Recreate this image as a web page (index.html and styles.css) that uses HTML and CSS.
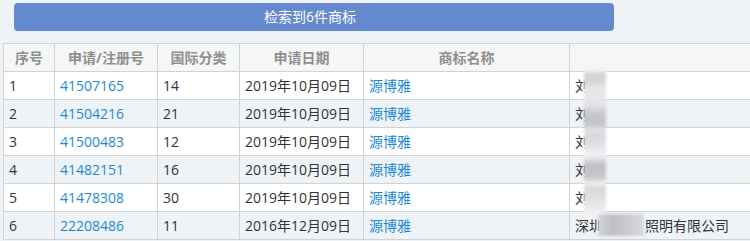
FILE: index.html
```html
<!DOCTYPE html>
<html lang="zh-CN">
<head>
<meta charset="utf-8">
<link rel="stylesheet" href="styles.css">
</head>
<body>
<div class="page">
  <div class="bar"><button class="btn">检索到6件商标</button></div>
  <div class="wrap">
    <table class="grid">
      <colgroup>
        <col class="c1"><col class="c2"><col class="c3"><col class="c4"><col class="c5"><col class="c6">
      </colgroup>
      <thead>
        <tr><th>序号</th><th>申请/注册号</th><th>国际分类</th><th>申请日期</th><th>商标名称</th><th></th></tr>
      </thead>
      <tbody>
        <tr><td>1</td><td><a>41507165</a></td><td>14</td><td>2019年10月09日</td><td><a>源博雅</a></td><td>刘</td></tr>
        <tr><td>2</td><td><a>41504216</a></td><td>21</td><td>2019年10月09日</td><td><a>源博雅</a></td><td>刘</td></tr>
        <tr><td>3</td><td><a>41500483</a></td><td>12</td><td>2019年10月09日</td><td><a>源博雅</a></td><td>刘</td></tr>
        <tr><td>4</td><td><a>41482151</a></td><td>16</td><td>2019年10月09日</td><td><a>源博雅</a></td><td>刘</td></tr>
        <tr><td>5</td><td><a>41478308</a></td><td>30</td><td>2019年10月09日</td><td><a>源博雅</a></td><td>刘</td></tr>
        <tr><td>6</td><td><a>22208486</a></td><td>11</td><td>2016年12月09日</td><td><a>源博雅</a></td><td>深圳<span class="gap"></span>照明有限公司</td></tr>
      </tbody>
    </table>
    <div class="mask m1"></div>
    <div class="mask m2"></div>
  </div>
</div>
</body>
</html>
```
FILE: styles.css
```css
html, body {
  margin: 0;
  padding: 0;
  background: #eff3f8;
  overflow: hidden;
}
body {
  font-family: "Open Sans", "Noto Sans CJK SC", sans-serif;
  font-size: 14px;
  color: #333;
}
.page {
  width: 750px;
  height: 241px;
  overflow: hidden;
}
.bar {
  padding: 3px 0 0 14px;
  height: 40px;
  box-sizing: border-box;
}
.btn {
  display: block;
  width: 600px;
  height: 28px;
  border: 0;
  border-radius: 4px;
  background: #6489cf;
  color: #fff;
  font-family: "Open Sans", "Noto Sans CJK SC", sans-serif;
  font-size: 14px;
  padding: 0 8px 1px 0;
  line-height: 27px;
}
.wrap {
  position: relative;
  margin: 3px 0 0 3px;
}
.grid {
  border-collapse: collapse;
  table-layout: fixed;
  width: 770px;
  background: #fff;
}
.c1 { width: 51px; }
.c2 { width: 103px; }
.c3 { width: 82px; }
.c4 { width: 124px; }
.c5 { width: 206px; }
.c6 { width: 204px; }
.grid th, .grid td {
  border: 1px solid #d2d2d2;
  height: 27px;
  padding: 0 0 0 5px;
  white-space: nowrap;
  line-height: 26px;
  overflow: hidden;
}
.grid th {
  background: #f5f6f6;
  color: #8f8f8f;
  font-weight: bold;
  text-align: center;
  padding: 0;
}
.grid tbody tr:nth-child(even) td {
  background: #eef3f8;
}
.grid a {
  color: #1e8ad6;
  text-decoration: none;
}
.gap {
  display: inline-block;
  width: 42px;
  height: 14px;
}
.mask {
  position: absolute;
  filter: blur(1.5px);
}
.m1 {
  left: 581px;
  top: 22px;
  width: 22px;
  height: 152px;
  background: linear-gradient(to bottom,
    #f4f4f4 0px, #f4f4f4 6px,
    #d6d6d8 8px, #d6d6d8 18px,
    #e7e7e9 22px, #e7e7e9 36px,
    #e2e2e6 40px, #c4c5c8 50px, #c4c5c8 60px,
    #e2e2e4 64px, #d8d8dc 72px, #e6e6ea 84px,
    #f0f0f2 88px, #ebebef 92px, #c0c0c4 100px, #c8c8cc 112px,
    #eeeef0 118px, #d8d8da 124px, #e6e6e8 140px, #f4f4f4 152px);
}
.m2 {
  left: 595px;
  top: 171px;
  width: 46px;
  height: 22px;
  background: linear-gradient(to right, #d4d5d9 0px, #bfc0c4 14px, #c8c9cd 28px, #d3d4d8 40px, #d8d9dd 46px);
}
```
